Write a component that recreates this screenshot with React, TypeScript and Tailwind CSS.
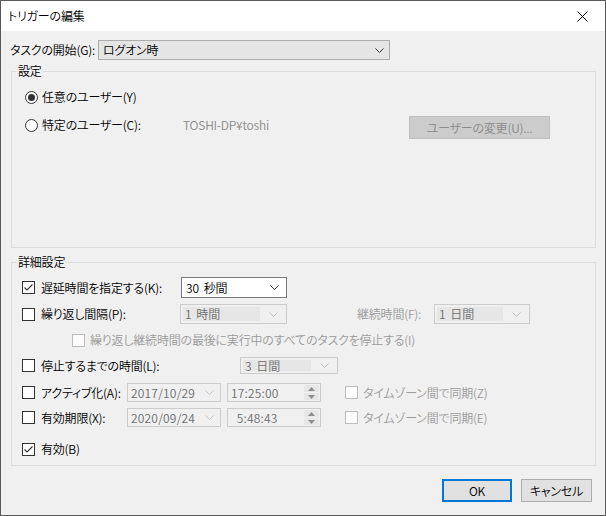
import React from "react";

const Chevron = ({ color }: { color: string }) => (
  <svg width="9" height="5" viewBox="0 0 9 5" className="shrink-0">
    <path d="M0.5 0.5 L4.5 4.5 L8.5 0.5" fill="none" stroke={color} strokeWidth="1" />
  </svg>
);

const Check = ({ checked, disabled }: { checked?: boolean; disabled?: boolean }) => (
  <span
    className={
      disabled
        ? "w-[13px] h-[13px] shrink-0 border border-[#bcbcbc] bg-[#fcfcfc] flex items-center justify-center"
        : "w-[13px] h-[13px] shrink-0 border border-[#333333] bg-white flex items-center justify-center"
    }
  >
    {checked && (
      <svg width="11" height="11" viewBox="0 0 11 11">
        <path d="M1.5 5.5 L4 8 L9.5 2.5" fill="none" stroke="#333333" strokeWidth="1.1" />
      </svg>
    )}
  </span>
);

const Radio = ({ checked }: { checked?: boolean }) => (
  <span className="w-[13px] h-[13px] shrink-0 rounded-full border border-[#333333] bg-white flex items-center justify-center">
    {checked && <span className="w-[7px] h-[7px] rounded-full bg-[#333333]" />}
  </span>
);

const DisabledCombo = ({ text, w, h }: { text: string; w: string; h: string }) => (
  <div className={`${w} ${h} border border-[#cccccc] bg-[#f0f0f0] flex items-center pl-[2px] pr-[8px]`}>
    <span className="flex-1 h-full py-[2px] flex">
      <span className="flex-1 bg-[#e6e6e6] text-[#6d6d6d] pl-[2px] flex items-center leading-[14px] whitespace-pre">{text}</span>
    </span>
    <span className="w-[18px] flex justify-end">
      <Chevron color="#bfbfbf" />
    </span>
  </div>
);

const Spin = () => (
  <div className="flex flex-col gap-[1px] w-[15px] h-[15px]">
    <div className="flex-1 bg-[#e6e6e6] flex items-center justify-center">
      <svg width="7" height="4" viewBox="0 0 7 4">
        <path d="M0 4 L3.5 0 L7 4 Z" fill="#8c8c8c" />
      </svg>
    </div>
    <div className="flex-1 bg-[#e6e6e6] flex items-center justify-center">
      <svg width="7" height="4" viewBox="0 0 7 4">
        <path d="M0 0 L3.5 4 L7 0 Z" fill="#8c8c8c" />
      </svg>
    </div>
  </div>
);

const DateBox = ({ text }: { text: string }) => (
  <div className="w-[94px] h-[19px] border border-[#cccccc] bg-[#f0f0f0] flex items-center pl-[3px] pr-[6px] text-[#6d6d6d]">
    <span className="flex-1 leading-[14px] tracking-[0.2px]">{text}</span>
    <Chevron color="#c4c4c4" />
  </div>
);

const TimeBox = ({ text }: { text: string }) => (
  <div className="w-[94px] h-[19px] border border-[#cccccc] bg-[#f0f0f0] flex items-center pl-[3px] pr-[1px] text-[#6d6d6d]">
    <span className="flex-1 leading-[14px] tracking-[0.2px] whitespace-pre">{text}</span>
    <Spin />
  </div>
);

export default function App() {
  return (
    <div className="w-[606px] h-[516px] border border-[#595959] bg-[#f0f0f0] flex flex-col text-[12px] leading-[16px] text-black font-['Noto_Sans_CJK_JP',sans-serif] font-[350] [font-feature-settings:'palt'] tracking-[-0.2px] whitespace-nowrap overflow-hidden">
      {/* Title bar */}
      <div className="h-[30px] shrink-0 bg-white flex items-center pl-[7px] pr-[17px]">
        <span className="text-[12px]">トリガーの編集</span>
        <svg width="11" height="11" viewBox="0 0 11 11" className="ml-auto">
          <path d="M0.5 0.5 L10.5 10.5 M10.5 0.5 L0.5 10.5" stroke="#000" strokeWidth="1" />
        </svg>
      </div>

      {/* Task start */}
      <div className="mt-[9px] h-[20px] flex items-center pl-[9px]">
        <span className="w-[88px]">タスクの開始(G):</span>
        <div className="w-[292px] h-[20px] border border-[#acacac] bg-[#e5e5e5] flex items-center pl-[4px] pr-[5px]">
          <span className="flex-1">ログオン時</span>
          <Chevron color="#333333" />
        </div>
      </div>

      {/* Group: 設定 */}
      <div className="relative mt-[11px] ml-[10px] w-[585px] h-[177px] shrink-0 border border-[#dcdcdc] pl-[13px] pt-[17px]">
        <span className="absolute -top-[9px] left-[5px] bg-[#f0f0f0] px-[1px]">設定</span>
        <div className="h-[16px] flex items-center gap-[4px]">
          <Radio checked />
          <span>任意のユーザー(Y)</span>
        </div>
        <div className="mt-[11px] flex items-start">
          <div className="w-[158px] mt-[1px] h-[16px] flex items-center gap-[4px]">
            <Radio />
            <span>特定のユーザー(C):</span>
          </div>
          <span className="w-[226px] mt-[1px] h-[16px] text-[#8a8a8a] tracking-[-0.2px]">TOSHI-DP¥toshi</span>
          <div className="w-[141px] h-[23px] border border-[#bfbfbf] bg-[#cccccc] flex items-center justify-center text-[#8a8a8a]">
            ユーザーの変更(U)...
          </div>
        </div>
      </div>

      {/* Group: 詳細設定 */}
      <div className="relative mt-[14px] ml-[10px] w-[585px] h-[204px] shrink-0 border border-[#dcdcdc] pl-[10px] pt-[14px]">
        <span className="absolute -top-[9px] left-[5px] bg-[#f0f0f0] px-[1px]">詳細設定</span>

        {/* K */}
        <div className="h-[21px] flex items-center">
          <div className="w-[159px] flex items-center gap-[6px]">
            <Check checked />
            <span>遅延時間を指定する(K):</span>
          </div>
          <div className="w-[106px] h-[21px] border border-[#7a7a7a] bg-white flex items-center pl-[4px] pr-[7px]">
            <span className="flex-1 whitespace-pre">30  秒間</span>
            <Chevron color="#333333" />
          </div>
        </div>

        {/* P */}
        <div className="mt-[6px] h-[20px] flex items-center">
          <div className="w-[158px] flex items-center gap-[6px]">
            <Check />
            <span>繰り返し間隔(P):</span>
          </div>
          <DisabledCombo text="1  時間" w="w-[107px]" h="h-[20px]" />
          <span className="ml-[70px] w-[77px] text-[#9a9a9a]">継続時間(F):</span>
          <DisabledCombo text="1  日間" w="w-[96px]" h="h-[20px]" />
        </div>

        {/* I */}
        <div className="mt-[8px] h-[16px] flex items-center pl-[50px] gap-[5px]">
          <Check disabled />
          <span className="text-[#9a9a9a]">繰り返し継続時間の最後に実行中のすべてのタスクを停止する(I)</span>
        </div>

        {/* L */}
        <div className="mt-[9px] h-[17px] flex items-center">
          <div className="w-[218px] flex items-center gap-[6px]">
            <Check />
            <span>停止するまでの時間(L):</span>
          </div>
          <DisabledCombo text="3  日間" w="w-[98px]" h="h-[17px]" />
        </div>

        {/* A */}
        <div className="mt-[9px] h-[19px] flex items-center">
          <div className="w-[105px] flex items-center gap-[6px]">
            <Check />
            <span>アクティブ化(A):</span>
          </div>
          <DateBox text="2017/10/29" />
          <div className="ml-[6px]">
            <TimeBox text="17:25:00" />
          </div>
          <div className="ml-[24px] flex items-center gap-[5px]">
            <Check disabled />
            <span className="text-[#9a9a9a]">タイムゾーン間で同期(Z)</span>
          </div>
        </div>

        {/* X */}
        <div className="mt-[6px] h-[19px] flex items-center">
          <div className="w-[105px] flex items-center gap-[6px]">
            <Check />
            <span>有効期限(X):</span>
          </div>
          <DateBox text="2020/09/24" />
          <div className="ml-[6px]">
            <TimeBox text={"\u00a0\u00a05:48:43"} />
          </div>
          <div className="ml-[24px] flex items-center gap-[5px]">
            <Check disabled />
            <span className="text-[#9a9a9a]">タイムゾーン間で同期(E)</span>
          </div>
        </div>

        {/* B */}
        <div className="mt-[13px] h-[18px] flex items-center gap-[6px]">
          <Check checked />
          <span>有効(B)</span>
        </div>
      </div>

      {/* Buttons */}
      <div className="mt-[13px] flex justify-end pr-[13px] gap-[9px]">
        <div className="w-[70px] h-[23px] border-2 border-[#0078d7] bg-[#e1e1e1] flex items-center justify-center">OK</div>
        <div className="w-[71px] h-[23px] border border-[#adadad] bg-[#e1e1e1] flex items-center justify-center">キャンセル</div>
      </div>
    </div>
  );
}
